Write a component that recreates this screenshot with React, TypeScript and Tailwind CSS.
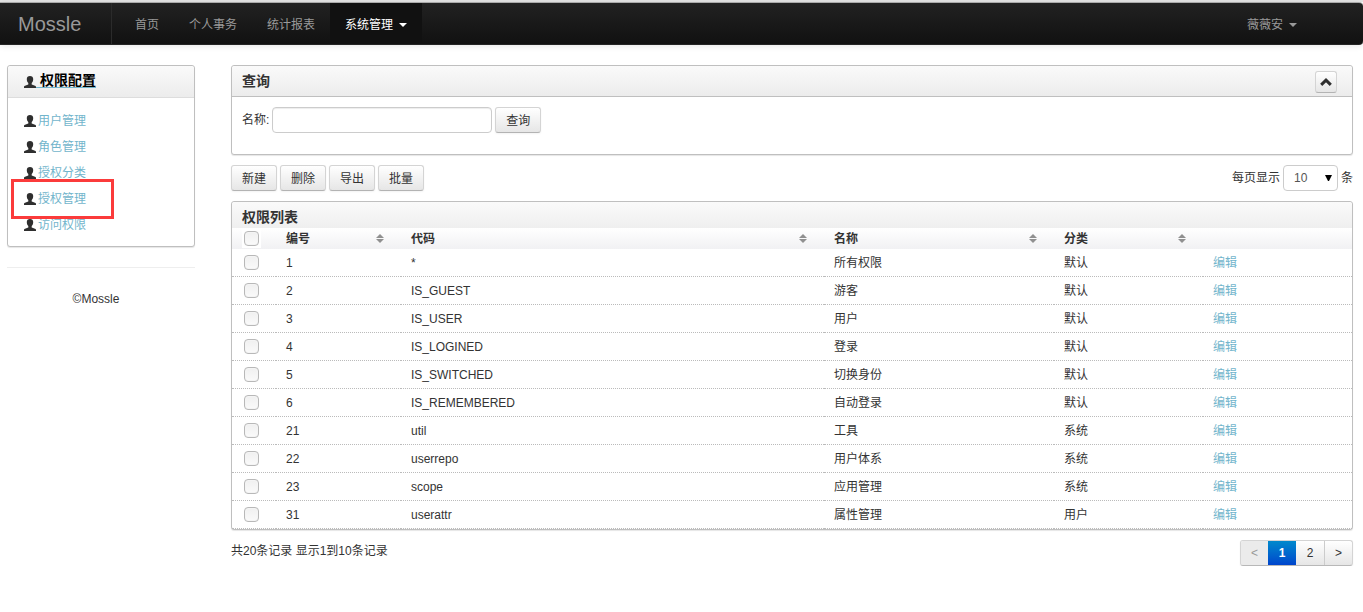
import React, { useState } from 'react';

const navItems = ['首页', '个人事务', '统计报表'];

const menuItems = ['用户管理', '角色管理', '授权分类', '授权管理', '访问权限'];

const columns = [
  { label: '编号', width: 'w-[125px]' },
  { label: '代码', width: '' },
  { label: '名称', width: 'w-[230px]' },
  { label: '分类', width: 'w-[149px]' },
];

const permissions = [
  { id: 1, code: '*', name: '所有权限', category: '默认' },
  { id: 2, code: 'IS_GUEST', name: '游客', category: '默认' },
  { id: 3, code: 'IS_USER', name: '用户', category: '默认' },
  { id: 4, code: 'IS_LOGINED', name: '登录', category: '默认' },
  { id: 5, code: 'IS_SWITCHED', name: '切换身份', category: '默认' },
  { id: 6, code: 'IS_REMEMBERED', name: '自动登录', category: '默认' },
  { id: 21, code: 'util', name: '工具', category: '系统' },
  { id: 22, code: 'userrepo', name: '用户体系', category: '系统' },
  { id: 23, code: 'scope', name: '应用管理', category: '系统' },
  { id: 31, code: 'userattr', name: '属性管理', category: '用户' },
];

const buttonClass =
  'h-[26px] px-2.5 pt-px rounded-[3px] border border-[#d4d4d4] border-b-[#b3b3b3] bg-linear-to-b from-white to-[#e6e6e6] shadow-[0_1px_2px_rgba(0,0,0,0.05)] cursor-pointer';

const panelClass = 'rounded-[3px] border border-[#bfbfbf] bg-white shadow-[0_1px_1px_rgba(0,0,0,0.1)]';

const UserIcon: React.FC = () => (
  <svg width="12" height="12" viewBox="0 0 12 12" className="shrink-0" fill="#2f2f2f" aria-hidden="true">
    <path d="M6 0C4 0 2.800 1 2.800 2.900c0 1.800.6 3.200 1.500 4.100v1.500L1 9.700C.3 10 0 10.300 0 11v1h12v-1c0-.7-.3-1-1-1.300L7.700 8.500V7c.9-.9 1.500-2.300 1.500-4.100C9.200 1 8 0 6 0z" />
  </svg>
);

const Caret: React.FC = () => (
  <svg width="8" height="4" viewBox="0 0 8 4" fill="currentColor" aria-hidden="true">
    <path d="M0 0h8L4 4z" />
  </svg>
);

const SortIcon: React.FC = () => (
  <svg width="8" height="9" viewBox="0 0 8 9" fill="#909090" aria-hidden="true">
    <path d="M0 4L4 0l4 4zM0 5h8L4 9z" />
  </svg>
);

const Checkbox: React.FC<React.InputHTMLAttributes<HTMLInputElement>> = (props) => (
  <input
    type="checkbox"
    className="block size-[15px] appearance-none rounded-[4px] border border-[#b8b8b8] bg-linear-to-b from-[#f0f0f0] to-[#fafafa] checked:to-[#999] shadow-[inset_0_0_0_1px_#f4f4f4]"
    {...props}
  />
);

const App: React.FC = () => {
  const [keyword, setKeyword] = useState('');
  const [pageSize, setPageSize] = useState('10');
  const [collapsed, setCollapsed] = useState(false);
  const [selected, setSelected] = useState<number[]>([]);

  const allSelected = selected.length === permissions.length;

  const toggleAll = () => {
    setSelected(allSelected ? [] : permissions.map((p) => p.id));
  };

  const toggleOne = (id: number) => {
    setSelected((prev) => (prev.includes(id) ? prev.filter((item) => item !== id) : [...prev, id]));
  };

  return (
    <div className="bg-white text-xs leading-5 text-[#333] font-['Liberation_Sans','Noto_Sans_CJK_SC',sans-serif]">
      {/* Navbar */}
      <header className="border-t-2 border-[#e5e5e5]">
        <nav className="flex h-[43px] items-stretch rounded-r-[4px] border-y border-t-[#aaa] border-b-[#252525] bg-linear-to-b from-[#222] to-[#111] text-[#999] shadow-[0_1px_6px_rgba(0,0,0,0.1)]">
          <a href="#" className="flex w-28 items-center border-r border-[#2b2b2b] pl-[18px] text-xl">
            Mossle
          </a>
          <div className="flex pl-2">
            {navItems.map((item) => (
              <a key={item} href="#" className="flex items-center px-[15px] pt-0.5">
                {item}
              </a>
            ))}
            <a href="#" className="flex items-center gap-1.5 bg-[#111] px-[15px] pt-0.5 text-white">
              系统管理
              <Caret />
            </a>
          </div>
          <a href="#" className="mr-[51px] ml-auto flex items-center gap-1.5 px-[15px] pt-0.5">
            薇薇安
            <Caret />
          </a>
        </nav>
      </header>

      <div className="flex gap-9 pt-5 pr-2.5 pl-[7px]">
        {/* Sidebar */}
        <aside className="w-[188px] shrink-0">
          <div className={panelClass}>
            <h2 className="flex h-8 items-center rounded-t-[3px] border-b border-[#ddd] bg-linear-to-b from-[#fafafa] to-[#ececec] px-4 pb-0.5 text-sm font-bold">
              <a href="#" className="flex items-end leading-none text-black">
                <UserIcon />
                <span className="border-b border-[#72b5cc] whitespace-pre"> 权限配置</span>
              </a>
            </h2>
            <ul className="px-4 pt-2.5 pb-2">
              {menuItems.map((item) => (
                <li key={item} className="relative flex h-[26px] items-center">
                  <a href="#" className="flex items-center gap-0.5 text-[#72b5cc]">
                    <UserIcon />
                    {item}
                  </a>
                  {item === '授权管理' && (
                    <span className="pointer-events-none absolute -top-[7px] -left-[13px] z-10 h-10 w-[103px] border-3 border-[#fb3b3b]" />
                  )}
                </li>
              ))}
            </ul>
          </div>
          <footer className="mt-5 border-t border-[#eee] pt-[21px] pr-2.5 text-center">©Mossle</footer>
        </aside>

        <main className="min-w-0 flex-1">
          {/* Search */}
          <section className={panelClass}>
            <header className="flex h-[31px] items-center justify-between rounded-t-[3px] border-b border-[#bfbfbf] bg-linear-to-b from-[#fafafa] to-[#ececec] pt-px pr-[15px] pl-2.5">
              <h2 className="pb-0.5 text-sm font-bold">查询</h2>
              <button
                type="button"
                aria-label="查询"
                onClick={() => setCollapsed(!collapsed)}
                className="flex size-[22px] items-center justify-center rounded-[3px] border border-[#d4d4d4] border-b-[#b3b3b3] bg-linear-to-b from-white to-[#e6e6e6]"
              >
                <svg width="12" height="8" viewBox="0 0 12 8" fill="none" stroke="#2f2f2f" strokeWidth="3" aria-hidden="true">
                  <path d="M1.200 6.900L6 2.200l4.800 4.700" />
                </svg>
              </button>
            </header>
            {!collapsed && (
              <form className="flex items-center px-2.5 pt-2.5 pb-[21px]" onSubmit={(e) => e.preventDefault()}>
                <label htmlFor="keyword">名称:</label>
                <input
                  id="keyword"
                  type="text"
                  value={keyword}
                  onChange={(e) => setKeyword(e.target.value)}
                  className="mx-[3px] h-[26px] w-[220px] rounded-[4px] border border-[#ccc] px-1.5 shadow-[inset_0_1px_1px_rgba(0,0,0,0.075)]"
                />
                <button type="submit" className={buttonClass}>
                  查询
                </button>
              </form>
            )}
          </section>

          {/* Toolbar */}
          <div className="my-2.5 flex items-center justify-between">
            <div className="flex gap-[3px]">
              <button type="button" className={buttonClass}>新建</button>
              <button type="button" className={buttonClass}>删除</button>
              <button type="button" className={buttonClass}>导出</button>
              <button type="button" className={buttonClass}>批量</button>
            </div>
            <div className="flex items-center gap-[3px]">
              <label htmlFor="page-size">每页显示</label>
              <div className="relative">
                <select
                  id="page-size"
                  value={pageSize}
                  onChange={(e) => setPageSize(e.target.value)}
                  className="block h-[26px] w-[55px] appearance-none rounded-[4px] border border-[#ccc] bg-white pl-2.5 text-[#555]"
                >
                  <option>10</option>
                  <option>20</option>
                  <option>50</option>
                </select>
                <svg width="7" height="6" viewBox="0 0 7 6" className="pointer-events-none absolute top-2.5 right-1.5" aria-hidden="true">
                  <path d="M0 0h7L4 6H3z" />
                </svg>
              </div>
              <span>条</span>
            </div>
          </div>

          {/* Permission list */}
          <section className={panelClass}>
            <header className="flex h-[26px] items-center rounded-t-[3px] bg-linear-to-b from-[#fafafa] to-[#efefef] px-2.5 pt-1">
              <h2 className="text-sm font-bold">权限列表</h2>
            </header>
            <table className="w-full table-fixed border-separate border-spacing-0 text-left">
              <thead className="bg-linear-to-b from-white to-[#f1f1f3]">
                <tr className="h-[21px]">
                  <th className="w-11 pl-2.5">
                    <div className="w-[19px] bg-white p-0.5">
                      <Checkbox aria-label="全选" checked={allSelected} onChange={toggleAll} />
                    </div>
                  </th>
                  {columns.map((column) => (
                    <th key={column.label} className={`${column.width} pr-[17px] pl-2.5`}>
                      <div className="flex items-center justify-between">
                        {column.label}
                        <SortIcon />
                      </div>
                    </th>
                  ))}
                  <th className="w-[149px]" />
                </tr>
              </thead>
              <tbody>
                {permissions.map((item) => (
                  <tr key={item.id} className="h-7 *:border-b *:border-dotted *:border-[#bbb] *:pl-2.5">
                    <td>
                      <div className="px-0.5">
                        <Checkbox
                          aria-label={item.name}
                          checked={selected.includes(item.id)}
                          onChange={() => toggleOne(item.id)}
                        />
                      </div>
                    </td>
                    <td>{item.id}</td>
                    <td>{item.code}</td>
                    <td>{item.name}</td>
                    <td>{item.category}</td>
                    <td>
                      <a href="#" className="text-[#72b5cc]">编辑</a>
                    </td>
                  </tr>
                ))}
              </tbody>
            </table>
          </section>

          {/* Pagination */}
          <div className="mt-2.5 flex items-start justify-between">
            <p className="pt-px">共20条记录 显示1到10条记录</p>
            <div className="flex h-[26px] overflow-hidden rounded-[3px] border border-[#d4d4d4] border-b-[#b8b8b8] bg-linear-to-b from-white to-[#e6e6e6] shadow-[0_1px_2px_rgba(0,0,0,0.05)]">
              <button type="button" disabled className="w-[27px] bg-[#ebebeb] text-[#999]">&lt;</button>
              <button type="button" className="w-7 bg-linear-to-b from-[#0088cc] to-[#0044cc] font-bold text-white">1</button>
              <button type="button" className="w-7">2</button>
              <button type="button" className="w-7 border-l border-[#ccc]">&gt;</button>
            </div>
          </div>
        </main>
      </div>
    </div>
  );
};

export default App;
